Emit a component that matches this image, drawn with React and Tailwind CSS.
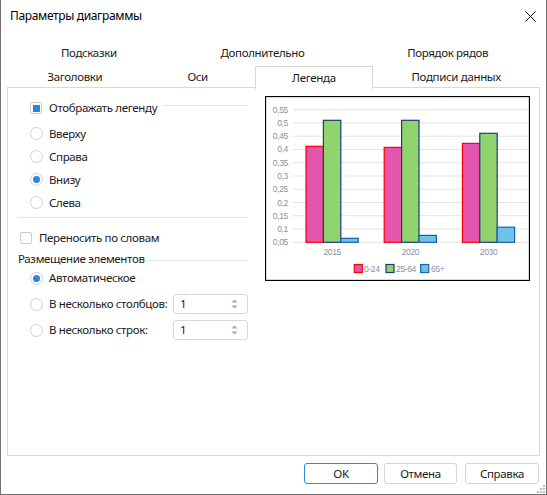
import React from 'react';

const Check = ({ checked }) => (
  <span className="w-[12px] h-[12px] rounded-[2px] border border-[#cccccc] bg-white flex items-center justify-center shrink-0">
    {checked && <span className="w-[7px] h-[7px] bg-[#2b88d8]" />}
  </span>
);

const Radio = ({ checked }) => (
  <span className="w-[13px] h-[13px] rounded-full border border-[#d0d0d0] bg-white flex items-center justify-center shrink-0">
    {checked && <span className="w-[7px] h-[7px] rounded-full bg-[#2b88d8]" />}
  </span>
);

const Spin = () => (
  <div className="w-[75px] h-[20px] border border-[#d9d9d9] rounded-[3px] flex items-center pl-[6px] pr-[9px]">
    <span className="flex-1">1</span>
    <svg width="7" height="14" viewBox="0 0 7 14">
      <path d="M3.5 2.5 L6.5 5.5 H0.5Z" fill="#a8a8a8" />
      <path d="M3.5 11.5 L6.5 8.5 H0.5Z" fill="#a8a8a8" />
    </svg>
  </div>
);

const series = [
  { name: '0-24', fill: '#e455ae', stroke: '#ff0000', values: [0.412, 0.408, 0.423] },
  { name: '25-64', fill: '#90d46f', stroke: '#1c3a7a', values: [0.51, 0.51, 0.461] },
  { name: '65+', fill: '#6cc4ea', stroke: '#1a5fa3', values: [0.065, 0.076, 0.107] },
];
const years = ['2015', '2020', '2030'];
const ticks = ['0,55', '0,5', '0,45', '0,4', '0,35', '0,3', '0,25', '0,2', '0,15', '0,1', '0,05'];

const yOf = (v) => 146.3 - (v - 0.05) * 265.2;

function Chart() {
  const barW = 17.4;
  return (
    <svg width="265" height="185" viewBox="0 0 265 185" className="block">
      <rect x="0.5" y="0.5" width="264" height="184" fill="white" stroke="#000" strokeWidth="1.3" />
      {ticks.map((t, i) => {
        const y = 13.7 + i * 13.26;
        return (
          <g key={t}>
            <line x1="28" x2="263" y1={y} y2={y} stroke="#e3e3e3" strokeWidth="1" />
            <text x="23" y={y + 3} textAnchor="end" fontSize="8.5" fill="#8b8fa3" fontFamily="Liberation Sans, sans-serif">{t}</text>
          </g>
        );
      })}
      {years.map((yr, g) => {
        const start = 41 + g * 78.2;
        return (
          <g key={yr}>
            {series.map((s, k) => {
              const top = yOf(s.values[g]);
              return (
                <rect key={s.name} x={start + k * barW} y={top} width={barW} height={146.3 - top} fill={s.fill} stroke={s.stroke} strokeWidth="1.2" />
              );
            })}
            <text x={start + 26.2} y="159" textAnchor="middle" fontSize="8.5" fill="#8b8fa3" fontFamily="Liberation Sans, sans-serif">{yr}</text>
          </g>
        );
      })}
      {[
        { s: series[0], x: 89.3, tx: 99 },
        { s: series[1], x: 121, tx: 131 },
        { s: series[2], x: 155.7, tx: 166 },
      ].map(({ s, x, tx }) => (
        <g key={s.name}>
          <rect x={x} y="168.5" width="8" height="8" fill={s.fill} stroke={s.stroke} strokeWidth="1.2" />
          <text x={tx} y="175.5" fontSize="8.5" fill="#8b8fa3" fontFamily="Liberation Sans, sans-serif">{s.name}</text>
        </g>
      ))}
    </svg>
  );
}

export default function App() {
  const row1 = [
    { label: 'Подсказки', w: 'w-[160px]' },
    { label: 'Дополнительно', w: 'w-[188px]' },
    { label: 'Порядок рядов', w: 'w-[183px]' },
  ];
  const row2 = [
    { label: 'Заголовки', w: 'w-[132px]' },
    { label: 'Оси', w: 'w-[114px]' },
    { label: 'Легенда', w: 'w-[119px]', active: true },
    { label: 'Подписи данных', w: 'w-[166px]' },
  ];

  return (
    <div className="w-[547px] h-[495px] bg-white border-x border-b border-[#707070] flex flex-col text-[11.5px] tracking-[-0.35px] text-[#1a1a1a] font-['Noto_Sans',sans-serif] select-none">
      {/* title bar */}
      <div className="h-[32px] flex items-center justify-between pl-[9px] pr-[10px] shrink-0">
        <span className="text-[12px] tracking-[-0.35px] text-black">Параметры диаграммы</span>
        <svg width="11" height="11" viewBox="0 0 11 11">
          <path d="M0.5 0.5 L10.5 10.5 M10.5 0.5 L0.5 10.5" stroke="#111" strokeWidth="1" />
        </svg>
      </div>

      {/* tabs */}
      <div className="pt-[9px] px-[7px] shrink-0">
        <div className="flex h-[23px] pl-[1px]">
          {row1.map((t) => (
            <div key={t.label} className={`${t.w} flex items-center justify-center`}>{t.label}</div>
          ))}
        </div>
        <div className="flex h-[22px] mt-[2px] pl-[1px] relative z-10 -mb-[1px]">
          {row2.map((t) =>
            t.active ? (
              <div key={t.label} className={`${t.w} h-[23px] flex items-center justify-center bg-white border-x border-t border-[#d9d9d9]`}>
                {t.label}
              </div>
            ) : (
              <div key={t.label} className={`${t.w} flex items-center justify-center`}>{t.label}</div>
            )
          )}
        </div>
      </div>

      {/* panel */}
      <div className="mx-[6px] h-[369px] border border-[#d9d9d9] flex items-start shrink-0">
        <div className="w-[240px] pl-[10px] pt-[9px]">
          <div className="h-[22px] flex items-center pl-[12px]">
            <Check checked />
            <span className="ml-[7px]">Отображать легенду</span>
            <span className="flex-1 ml-[6px] border-t border-[#e3e3e3] -mt-[5px]" />
          </div>
          <div className="mt-[3px]">
            {[
              ['Вверху', false],
              ['Справа', false],
              ['Внизу', true],
              ['Слева', false],
            ].map(([l, c]) => (
              <div key={l} className="h-[23px] flex items-center pl-[12px]">
                <Radio checked={c} />
                <span className="ml-[6px]">{l}</span>
              </div>
            ))}
          </div>
          <div className="mt-[3px] border-t border-[#e6e6e6]" />
          <div className="mt-[9px] h-[22px] flex items-center pl-[2px]">
            <Check />
            <span className="ml-[7px]">Переносить по словам</span>
          </div>
          <div className="mt-[1px] h-[18px] flex items-center">
            <span>Размещение элементов</span>
            <span className="flex-1 ml-[3px] border-t border-[#e6e6e6] mt-[3px]" />
          </div>
          <div className="h-[20px] flex items-center pl-[12px]">
            <Radio checked />
            <span className="ml-[6px]">Автоматическое</span>
          </div>
          <div className="mt-[6px] h-[20px] flex items-center pl-[12px]">
            <Radio />
            <span className="ml-[6px] w-[124px] whitespace-nowrap">В несколько столбцов:</span>
            <Spin />
          </div>
          <div className="mt-[6px] h-[20px] flex items-center pl-[12px]">
            <Radio />
            <span className="ml-[6px] w-[124px] whitespace-nowrap">В несколько строк:</span>
            <Spin />
          </div>
        </div>
        <div className="ml-[17px] mt-[8px]">
          <Chart />
        </div>
      </div>

      {/* buttons */}
      <div className="flex justify-end pr-[7px] mt-[7px]">
        <button className="w-[74px] h-[21px] border border-[#2c8ad6] rounded-[3px] bg-white">OK</button>
        <button className="ml-[6px] w-[73px] h-[21px] border border-[#d5d5d5] rounded-[3px] bg-white">Отмена</button>
        <button className="ml-[8px] w-[74px] h-[21px] border border-[#d5d5d5] rounded-[3px] bg-white">Справка</button>
      </div>
      <div className="flex-1 flex items-end justify-end pr-[1px] pb-[1px]">
        <svg width="8" height="8" viewBox="0 0 8 8">
          <rect x="6" y="0" width="2" height="2" fill="#bdbdbd" />
          <rect x="3" y="3" width="2" height="2" fill="#bdbdbd" />
          <rect x="6" y="3" width="2" height="2" fill="#bdbdbd" />
          <rect x="0" y="6" width="2" height="2" fill="#bdbdbd" />
          <rect x="3" y="6" width="2" height="2" fill="#bdbdbd" />
          <rect x="6" y="6" width="2" height="2" fill="#bdbdbd" />
        </svg>
      </div>
    </div>
  );
}
